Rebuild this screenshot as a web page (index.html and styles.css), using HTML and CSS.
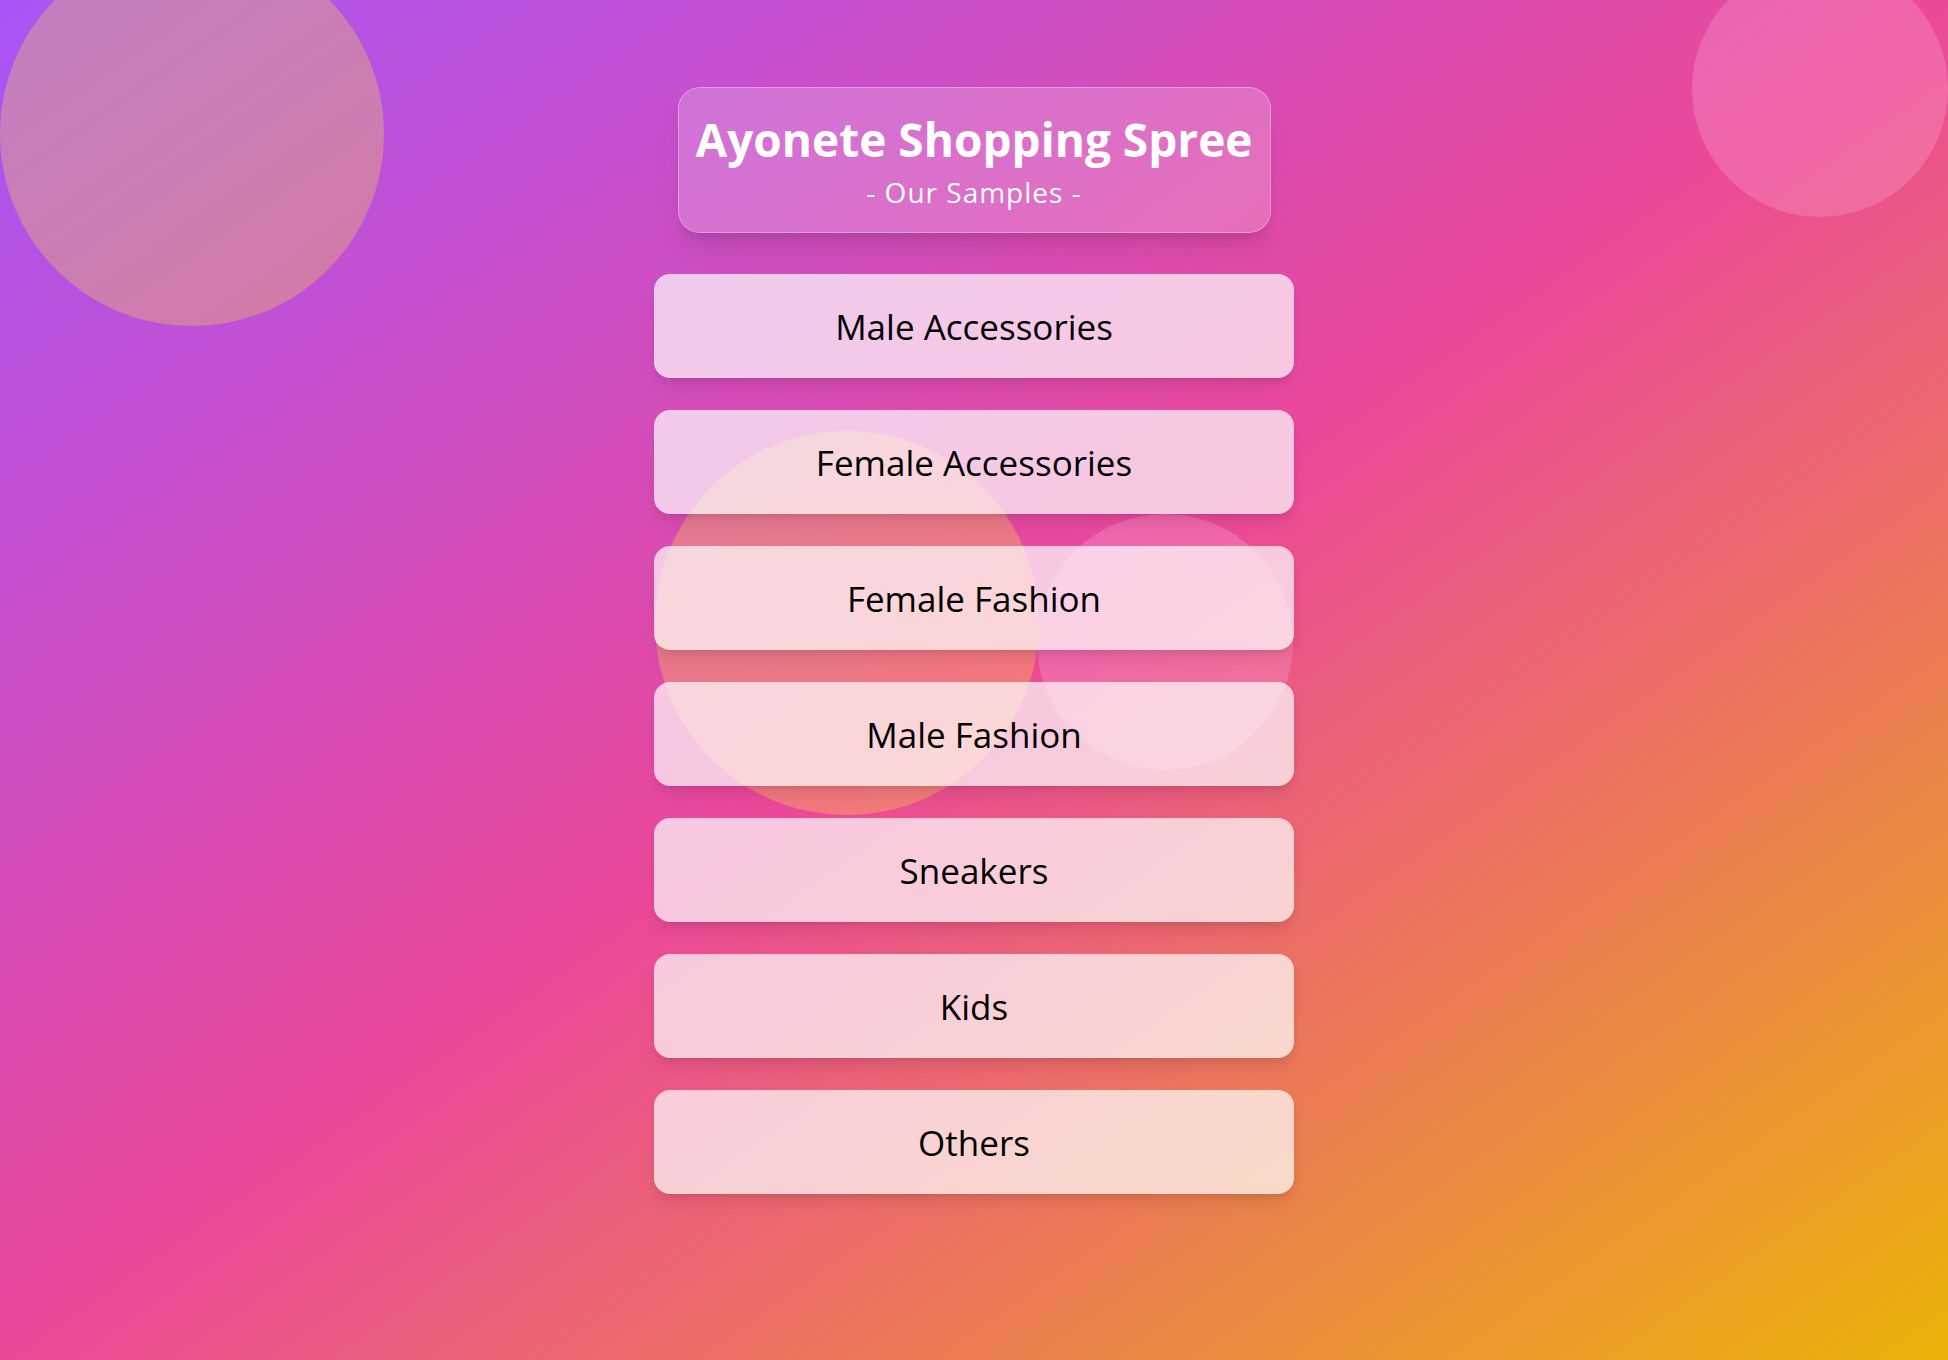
FILE: index.html
```html
<!DOCTYPE html>
<html lang="en">
<head>
<meta charset="utf-8">
<title>Ayonete Shopping Spree</title>
<link rel="stylesheet" href="styles.css">
</head>
<body>
<div class="page">
  <div class="blob blob-yellow blob-top-left"></div>
  <div class="blob blob-pink blob-top-right"></div>
  <div class="blob blob-yellow blob-middle"></div>
  <div class="blob blob-pink blob-middle-right"></div>

  <main class="content">
    <header class="hero-card">
      <h1 class="hero-title">Ayonete Shopping Spree</h1>
      <p class="hero-subtitle">- Our Samples -</p>
    </header>

    <nav class="category-list">
      <a class="category" href="#">Male Accessories</a>
      <a class="category" href="#">Female Accessories</a>
      <a class="category" href="#">Female Fashion</a>
      <a class="category" href="#">Male Fashion</a>
      <a class="category" href="#">Sneakers</a>
      <a class="category" href="#">Kids</a>
      <a class="category" href="#">Others</a>
    </nav>
  </main>
</div>
</body>
</html>
```

FILE: styles.css
```css
html, body {
  margin: 0;
  padding: 0;
  height: 100%;
}

body {
  font-family: "Open Sans", "Noto Sans", "DejaVu Sans", sans-serif;
}

.page {
  position: relative;
  min-height: 100vh;
  overflow: hidden;
  background: linear-gradient(to bottom right, #a855f7, #ec4899, #eab308);
}

.blob {
  position: absolute;
  border-radius: 50%;
  z-index: 0;
}

.blob-yellow {
  width: 384px;
  height: 384px;
  background: rgba(253, 224, 71, 0.3);
}

.blob-pink {
  width: 256px;
  height: 256px;
  background: rgba(249, 168, 212, 0.3);
}

.blob-top-left {
  left: 0;
  top: -58px;
}

.blob-top-right {
  right: 0;
  top: -39px;
}

.blob-middle {
  left: 655px;
  top: 431px;
}

.blob-middle-right {
  left: 1037px;
  top: 514px;
}

.content {
  position: relative;
  z-index: 1;
  display: flex;
  flex-direction: column;
  align-items: center;
  padding-top: 87px;
}

.hero-card {
  box-sizing: border-box;
  width: 593px;
  padding: 27px 8px 24px;
  margin-bottom: 41px;
  border: 1px solid rgba(255, 255, 255, 0.3);
  border-radius: 22px;
  background: rgba(255, 255, 255, 0.2);
  box-shadow: 0 20px 25px -5px rgba(0, 0, 0, 0.1), 0 8px 10px -6px rgba(0, 0, 0, 0.1);
  text-align: center;
  color: #fff;
}

.hero-title {
  margin: 0;
  font-size: 46px;
  line-height: 48px;
  font-weight: 700;
  white-space: nowrap;
}

.hero-subtitle {
  margin: 13px 0 0;
  font-size: 28px;
  line-height: 32px;
  font-weight: 400;
  letter-spacing: 1px;
}

.category-list {
  display: flex;
  flex-direction: column;
  gap: 32px;
  width: 640px;
}

.category {
  display: flex;
  align-items: center;
  justify-content: center;
  height: 104px;
  border-radius: 16px;
  background: rgba(255, 255, 255, 0.7);
  box-shadow: 0 10px 15px -3px rgba(0, 0, 0, 0.1), 0 4px 6px -4px rgba(0, 0, 0, 0.1);
  color: #000;
  font-size: 35px;
  text-decoration: none;
}
```
